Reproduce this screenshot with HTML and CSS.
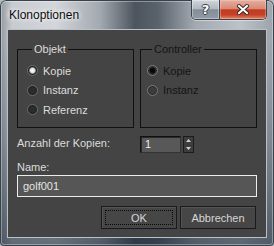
FILE: index.html
```html
<!DOCTYPE html>
<html>
<head>
<meta charset="utf-8">
<link rel="stylesheet" href="styles.css">
</head>
<body>
<div class="window">
  <div class="titlebar">
    <span class="title">Klonoptionen</span>
    <div class="caption">
      <span class="cbtn help">?</span>
      <span class="cbtn close">
        <svg width="12" height="11" viewBox="0 0 12 11"><path class="xo" d="M2 2 L10 9 M10 2 L2 9"/><path class="xi" d="M2 2 L10 9 M10 2 L2 9"/></svg>
      </span>
    </div>
  </div>
  <div class="client">
    <div class="groups">
      <fieldset class="group g-obj">
        <legend>Objekt</legend>
        <div class="radio on"><span class="dot"></span>Kopie</div>
        <div class="radio"><span class="dot"></span>Instanz</div>
        <div class="radio"><span class="dot"></span>Referenz</div>
      </fieldset>
      <fieldset class="group g-ctrl disabled">
        <legend>Controller</legend>
        <div class="radio on"><span class="dot"></span>Kopie</div>
        <div class="radio"><span class="dot"></span>Instanz</div>
      </fieldset>
    </div>
    <div class="count-row">
      <span class="label">Anzahl der Kopien:</span>
      <div class="spinner">
        <span class="spin-field">1</span>
        <span class="spin-btns">
          <span class="spin-b"><svg width="5" height="3" viewBox="0 0 5 3"><path d="M2.5 0 L5 3 L0 3 Z"/></svg></span>
          <span class="spin-b"><svg width="5" height="3" viewBox="0 0 5 3"><path d="M0 0 L5 0 L2.5 3 Z"/></svg></span>
        </span>
      </div>
    </div>
    <div class="name-label">Name:</div>
    <div class="name-field">golf001</div>
    <div class="buttons">
      <span class="btn default"><span class="focus">OK</span></span>
      <span class="btn">Abbrechen</span>
    </div>
  </div>
</div>
</body>
</html>
```

FILE: styles.css
```css
* { box-sizing: border-box; }
html, body { margin: 0; padding: 0; background: #b4bac0; }
body {
  font-family: "Liberation Sans", Arial, sans-serif;
  font-size: 11px;
}
.window {
  width: 274px;
  height: 246px;
  display: flex;
  flex-direction: column;
  padding: 0 7px 8px;
  border-radius: 6px 6px 4px 4px;
  background:
    linear-gradient(to bottom, rgba(0,0,0,0) 0, rgba(0,0,0,0) 40px, rgba(30,45,60,0.25) 140px, rgba(25,40,55,0.6) 246px),
    linear-gradient(to right, #8f969e 0, #c7cbd0 12px, #d3d6da 55px, #a3a9b0 100px, #4c545e 135px, #5a626c 158px, #a2a9b1 195px, #bcc2c8 240px, #9ca3ab 274px);
  box-shadow: inset 0 0 0 1px #39414a, inset 0 0 0 2px rgba(255,255,255,0.35);
}
.titlebar {
  height: 29px;
  display: flex;
  justify-content: space-between;
  align-items: flex-start;
  padding-left: 2px;
}
.title {
  margin-top: 8px;
  font-size: 12px;
  line-height: 15px;
  color: #0c0c0c;
  text-shadow: 0 0 4px #fff, 0 0 6px rgba(255,255,255,0.8);
}
.caption {
  display: flex;
  width: 76px;
  height: 20px;
  border: 1px solid #3b434c;
  border-top: none;
  border-radius: 0 0 5px 5px;
  overflow: hidden;
  box-shadow: 0 1px 0 rgba(255,255,255,0.45);
}
.cbtn {
  display: flex;
  align-items: center;
  justify-content: center;
  height: 100%;
}
.help {
  width: 28px;
  border-right: 1px solid #3b434c;
  background: linear-gradient(#d1d6db, #b2b9c0 45%, #838d98 52%, #929ca7 100%);
  box-shadow: inset 0 0 0 1px rgba(255,255,255,0.35);
  color: #fff;
  font-weight: bold;
  font-size: 13px;
  font-family: "DejaVu Sans", sans-serif;
  text-shadow: 1px 0 0 #3a3f45, -1px 0 0 #3a3f45, 0 1px 0 #3a3f45, 0 -1px 0 #3a3f45;
}
.close {
  width: 46px;
  background: linear-gradient(#e6ae9f, #d88a76 45%, #c13a1f 52%, #c4422a 78%, #e58763 100%);
  box-shadow: inset 0 0 0 1px rgba(255,220,210,0.35);
}
.close svg { display: block; }
.xo { stroke: #3b2a27; stroke-width: 4; fill: none; stroke-linecap: square; }
.xi { stroke: #fff; stroke-width: 2; fill: none; stroke-linecap: square; }

.client {
  width: 260px;
  height: 209px;
  border: 1px solid #b9c0c7;
  background: #444444;
  padding: 13px 9px 0;
  color: #dcdcdc;
}
.groups {
  display: flex;
  gap: 6px;
}
.group {
  width: 117px;
  height: 85px;
  margin: 0;
  padding: 5px 0 0 9px;
  min-width: 0;
  border: 1px solid #111111;
}
.g-ctrl { padding-left: 6px; }
.group legend {
  margin-left: 5px;
  padding: 0 2px;
  line-height: 13px;
}
.radio {
  display: flex;
  align-items: center;
  height: 19.5px;
}
.dot {
  width: 11px;
  height: 11px;
  margin-right: 5px;
  border-radius: 50%;
  border: 1px solid #6e6e6e;
  background: #2c2c2c;
  box-shadow: inset 0 0 0 1px #1f1f1f;
}
.radio.on .dot {
  background: radial-gradient(circle, #ffffff 0, #e8e8e8 2px, #9a9a9a 3px, #2a2a2a 4px);
}
.disabled { color: #141414; }
.disabled .dot { border-color: #7c7c7c; background: #3c3c3c; box-shadow: inset 0 0 0 1px #2a2a2a; }
.disabled .radio.on .dot {
  background: radial-gradient(circle, #050505 0, #0a0a0a 2.5px, #3c3c3c 3.5px);
}

.count-row {
  display: flex;
  margin-top: 8px;
  height: 17px;
}
.label {
  width: 123px;
  line-height: 15px;
}
.spinner {
  display: flex;
  gap: 2px;
}
.spin-field {
  width: 41px;
  height: 17px;
  padding-left: 4px;
  line-height: 15px;
  background: #585858;
  border: 1px solid #111;
  border-right-color: #333;
  border-bottom-color: #333;
  box-shadow: inset 1px 1px 0 #2a2a2a;
  color: #e8ecf4;
}
.spin-btns {
  display: flex;
  flex-direction: column;
  width: 11px;
  height: 17px;
  border: 1px solid #1c1c1c;
  background: #3d3d3d;
}
.spin-b {
  flex: 1;
  display: flex;
  align-items: center;
  justify-content: center;
}
.spin-b svg { display: block; fill: #d0d0d0; }
.name-label {
  margin-top: 7px;
  line-height: 14px;
}
.name-field {
  margin-top: 1px;
  height: 22px;
  padding-left: 5px;
  line-height: 20px;
  background: #565656;
  border: 1px solid #ececec;
  color: #e4e4e4;
}
.buttons {
  display: flex;
  justify-content: flex-end;
  gap: 3px;
  margin-top: 9px;
  margin-right: 1px;
}
.btn {
  width: 76px;
  height: 23px;
  display: flex;
  align-items: center;
  justify-content: center;
  background: #464646;
  border: 1px solid #1a1a1a;
  box-shadow: inset 1px 1px 0 #555;
  color: #d6d6d6;
}
.btn.default { padding: 3px; }
.focus {
  width: 100%;
  height: 100%;
  display: flex;
  align-items: center;
  justify-content: center;
  border: 1px dotted #0a0a0a;
}
```
